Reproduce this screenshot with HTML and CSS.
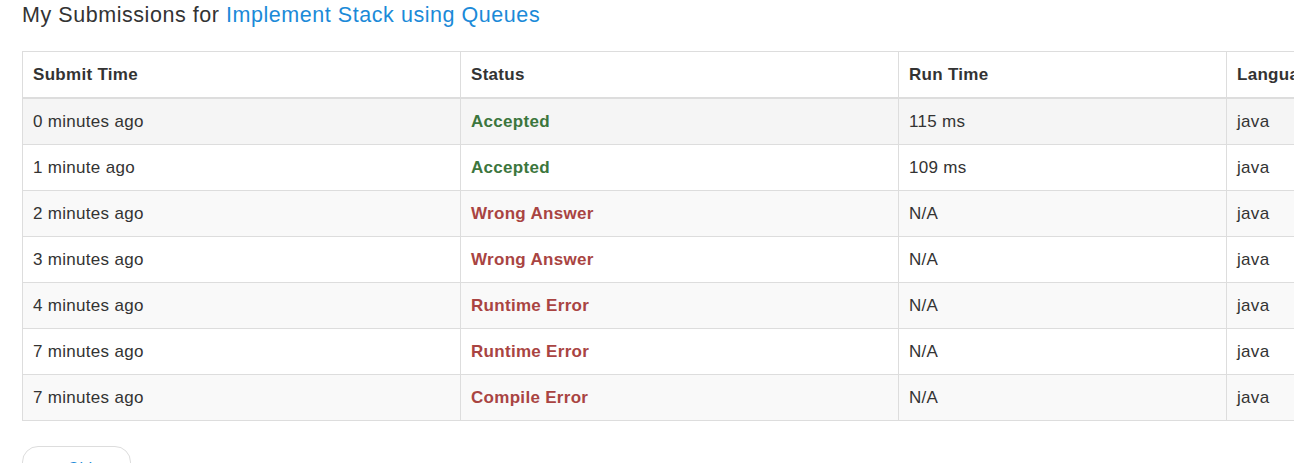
FILE: index.html
```html
<!DOCTYPE html>
<html>
<head>
<meta charset="utf-8">
<link rel="stylesheet" href="styles.css">
</head>
<body>
<div class="page">
  <h3 class="title">My Submissions for <a class="title-link" href="#">Implement Stack using Queues</a></h3>
  <table class="subs">
    <colgroup>
      <col class="c-time"><col class="c-status"><col class="c-run"><col class="c-lang">
    </colgroup>
    <thead>
      <tr><th>Submit Time</th><th>Status</th><th>Run Time</th><th>Language</th></tr>
    </thead>
    <tbody>
      <tr class="hover"><td>0 minutes ago</td><td class="ok">Accepted</td><td>115 ms</td><td>java</td></tr>
      <tr><td>1 minute ago</td><td class="ok">Accepted</td><td>109 ms</td><td>java</td></tr>
      <tr><td>2 minutes ago</td><td class="bad">Wrong Answer</td><td>N/A</td><td>java</td></tr>
      <tr><td>3 minutes ago</td><td class="bad">Wrong Answer</td><td>N/A</td><td>java</td></tr>
      <tr><td>4 minutes ago</td><td class="bad">Runtime Error</td><td>N/A</td><td>java</td></tr>
      <tr><td>7 minutes ago</td><td class="bad">Runtime Error</td><td>N/A</td><td>java</td></tr>
      <tr><td>7 minutes ago</td><td class="bad">Compile Error</td><td>N/A</td><td>java</td></tr>
    </tbody>
  </table>
  <div class="pager">
    <a class="pager-btn" href="#">&larr; Older</a>
  </div>
</div>
</body>
</html>
```

FILE: styles.css
```css
html, body {
  margin: 0;
  padding: 0;
  overflow: hidden;
  background: #fff;
}
body {
  font-family: "Liberation Sans", Arial, Helvetica, sans-serif;
  font-size: 17px;
  color: #333;
}
.page {
  padding: 0 0 0 22px;
  width: 1600px;
}
.title {
  margin: 2px 0 23px 0;
  font-size: 21.5px;
  letter-spacing: 0.55px;
  font-weight: normal;
  line-height: 26px;
  color: #333;
}
.title-link {
  color: #1b8ad8;
  text-decoration: none;
}
.subs {
  border-collapse: collapse;
  border-spacing: 0;
  width: 1532px;
  table-layout: fixed;
  border: 1px solid #ddd;
}
.c-time { width: 438px; }
.c-status { width: 438px; }
.c-run { width: 328px; }
.c-lang { width: 328px; }
.subs th, .subs td {
  border: 1px solid #ddd;
  padding: 11px 10px;
  line-height: 23px;
  letter-spacing: 0.3px;
  text-align: left;
  vertical-align: top;
  white-space: nowrap;
}
.subs th {
  font-weight: bold;
  border-bottom-width: 2px;
}
.subs tbody tr:nth-child(odd) {
  background: #f9f9f9;
}
.subs tbody tr.hover {
  background: #f5f5f5;
}
.ok {
  color: #3c763d;
  font-weight: bold;
}
.bad {
  color: #a94442;
  font-weight: bold;
}
.pager {
  margin-top: 25px;
  display: flex;
}
.pager-btn {
  display: inline-block;
  width: 79px;
  padding: 10px 14px;
  border: 1px solid #ddd;
  border-radius: 16px;
  color: #1b8ad8;
  text-decoration: none;
  text-align: center;
  font-size: 16px;
  line-height: 23px;
}
```
